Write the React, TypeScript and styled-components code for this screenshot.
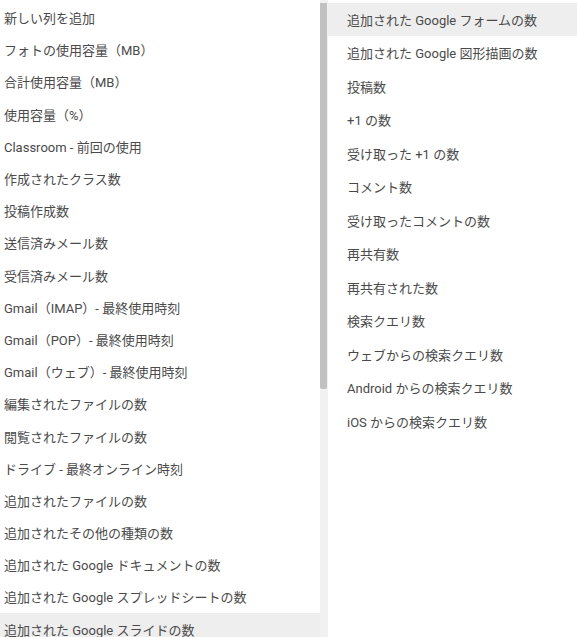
import React from "react";
import styled, { createGlobalStyle } from "styled-components";

const leftItems = [
  "新しい列を追加",
  "フォトの使用容量（MB）",
  "合計使用容量（MB）",
  "使用容量（%）",
  "Classroom - 前回の使用",
  "作成されたクラス数",
  "投稿作成数",
  "送信済みメール数",
  "受信済みメール数",
  "Gmail（IMAP）- 最終使用時刻",
  "Gmail（POP）- 最終使用時刻",
  "Gmail（ウェブ）- 最終使用時刻",
  "編集されたファイルの数",
  "閲覧されたファイルの数",
  "ドライブ - 最終オンライン時刻",
  "追加されたファイルの数",
  "追加されたその他の種類の数",
  "追加された Google ドキュメントの数",
  "追加された Google スプレッドシートの数",
  "追加された Google スライドの数",
];

const rightItems = [
  "追加された Google フォームの数",
  "追加された Google 図形描画の数",
  "投稿数",
  "+1 の数",
  "受け取った +1 の数",
  "コメント数",
  "受け取ったコメントの数",
  "再共有数",
  "再共有された数",
  "検索クエリ数",
  "ウェブからの検索クエリ数",
  "Android からの検索クエリ数",
  "iOS からの検索クエリ数",
];

const GlobalStyle = createGlobalStyle`
  body {
    margin: 0;
    background: #fff;
    font-family: Roboto, "Noto Sans CJK JP", sans-serif;
  }
`;

const Page = styled.div`
  display: flex;
  width: 577px;
  height: 637px;
  overflow: hidden;
`;

const Column = styled.div<{ $width?: number; $top: number }>`
  display: flex;
  flex-direction: column;
  flex: ${(p) => (p.$width ? `0 0 ${p.$width}px` : "1")};
  padding-top: ${(p) => p.$top}px;
`;

const Row = styled.div<{ $h: number; $pad: number; $active?: boolean }>`
  flex: 0 0 ${(p) => p.$h}px;
  display: flex;
  align-items: center;
  padding-left: ${(p) => p.$pad}px;
  font-size: 13px;
  color: #4a4a4a;
  white-space: nowrap;
  background: ${(p) => (p.$active ? "#eeeeee" : "transparent")};
`;

const Track = styled.div`
  flex: 0 0 8px;
  background: #f1f1f1;
  padding-top: 3px;
`;

const Thumb = styled.div`
  width: 7px;
  height: 386px;
  background: #c1c1c1;
  border-radius: 0 0 2px 2px;
`;

export default function App() {
  return (
    <Page>
      <GlobalStyle />
      <Column $width={320} $top={1.5}>
        {leftItems.map((t, i) => (
          <Row key={t} $h={32.2} $pad={4} $active={i === leftItems.length - 1}>
            {t}
          </Row>
        ))}
      </Column>
      <Track>
        <Thumb />
      </Track>
      <Column $top={2.5}>
        {rightItems.map((t, i) => (
          <Row key={t} $h={33.5} $pad={19} $active={i === 0}>
            {t}
          </Row>
        ))}
      </Column>
    </Page>
  );
}
